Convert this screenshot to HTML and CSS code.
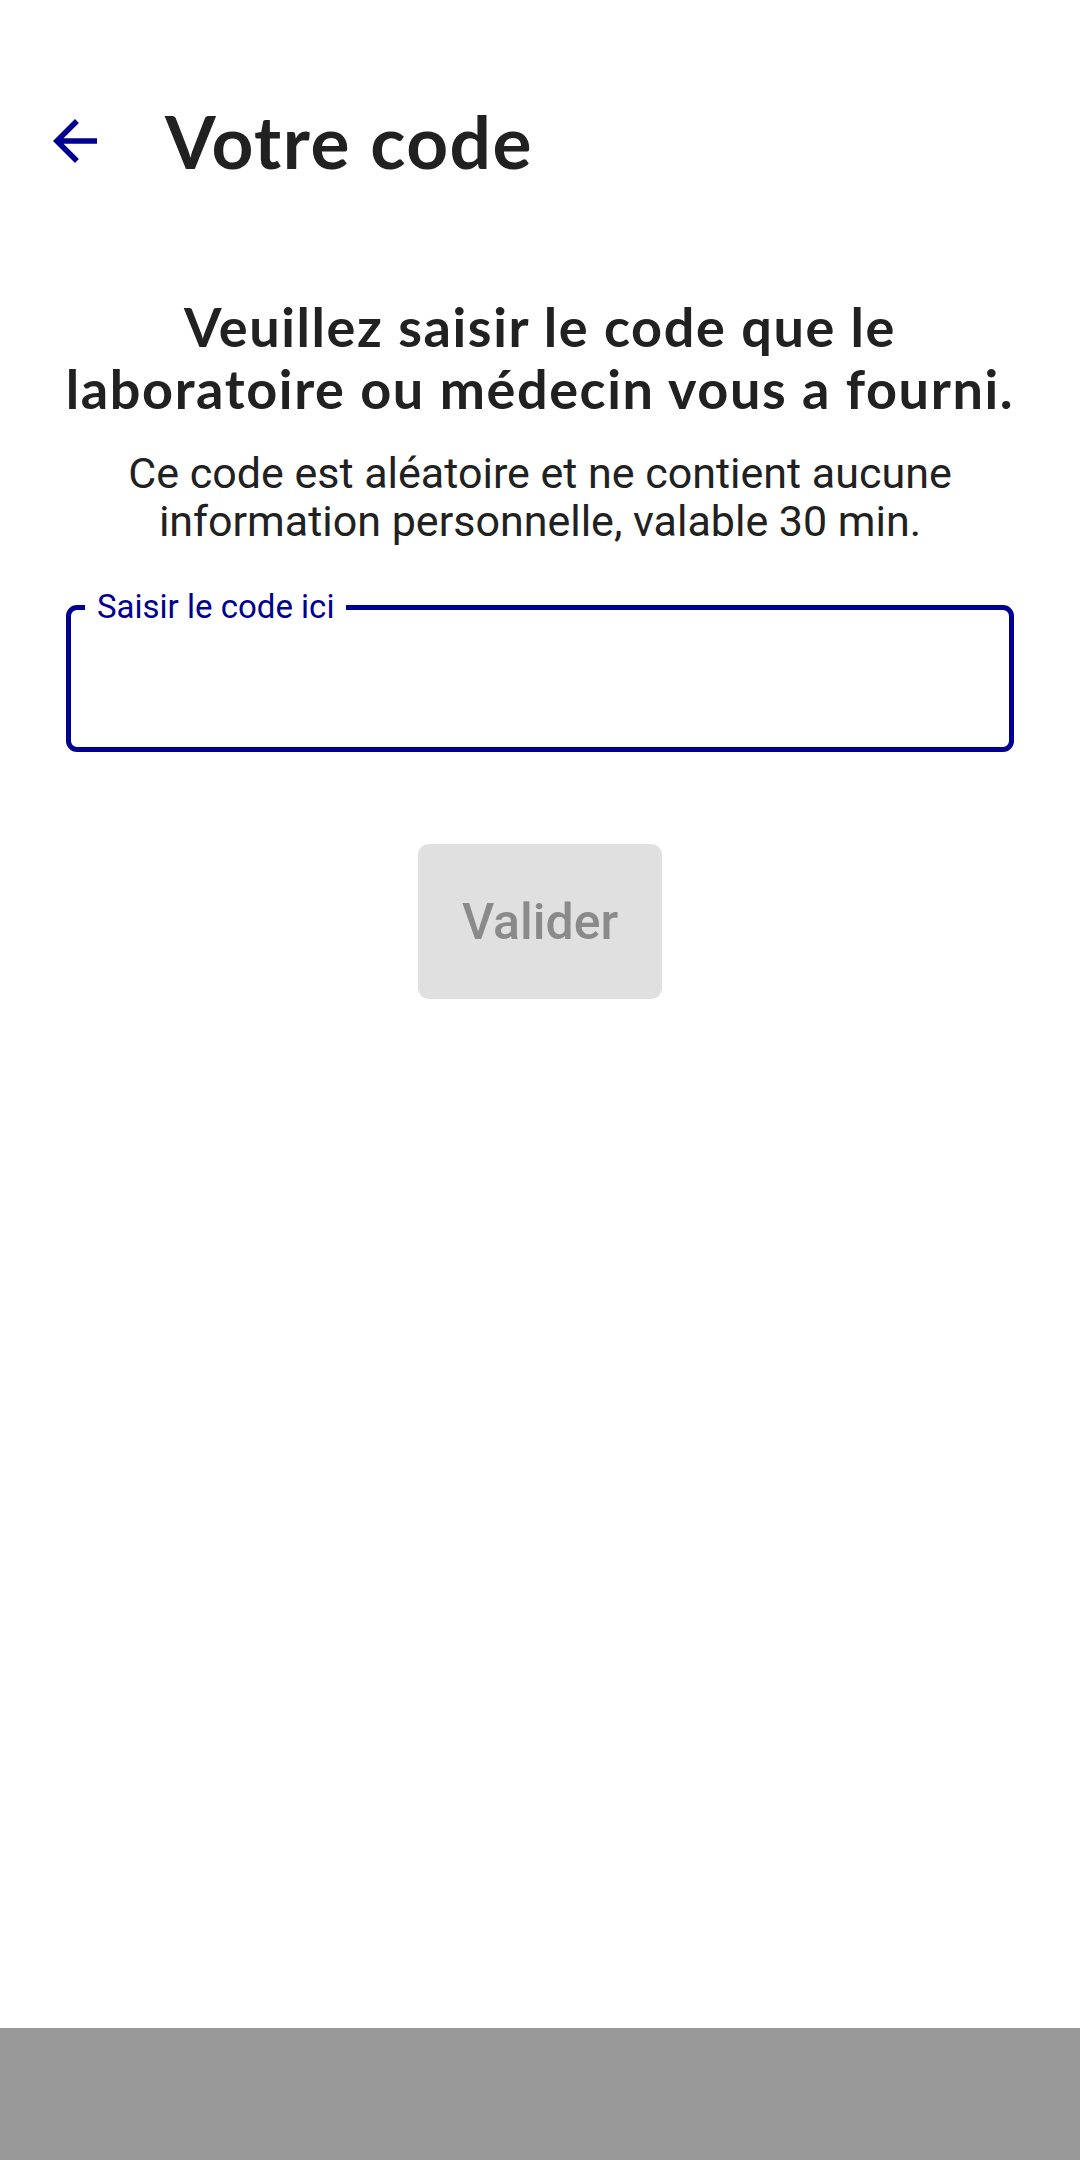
FILE: index.html
```html
<!DOCTYPE html>
<html lang="fr">
<head>
<meta charset="utf-8">
<title>Votre code</title>
<link rel="stylesheet" href="styles.css">
</head>
<body>
<div class="screen">
  <main class="main">
    <header class="topbar">
      <button class="back" aria-label="Retour">
        <svg viewBox="0 0 24 24" width="66" height="66"><path d="M20 11H7.83l5.59-5.59L12 4l-8 8 8 8 1.41-1.41L7.83 13H20v-2z" fill="#000091"/></svg>
      </button>
      <h1 class="title">Votre code</h1>
    </header>
    <section class="content">
      <h2 class="heading">Veuillez saisir le code que le laboratoire ou médecin vous a fourni.</h2>
      <p class="sub">Ce code est aléatoire et ne contient aucune information personnelle, valable 30 min.</p>
      <div class="field">
        <span class="field-label">Saisir le code ici</span>
      </div>
      <div class="actions">
        <button class="validate" disabled>Valider</button>
      </div>
    </section>
  </main>
  <footer class="navbar"></footer>
</div>
</body>
</html>
```
FILE: styles.css
```css
html, body {
  margin: 0;
  padding: 0;
  background: #ffffff;
}
.screen {
  width: 1080px;
  min-height: 2160px;
  display: flex;
  flex-direction: column;
}
.main {
  flex: 1;
}
.topbar {
  display: flex;
  align-items: center;
  padding-top: 97px;
  height: 88px;
}
.back {
  width: 66px;
  height: 66px;
  margin-left: 42px;
  padding: 0;
  border: 0;
  background: none;
  display: flex;
}
.title {
  margin: 0 0 0 57px;
  font-family: Lato, "Noto Sans", sans-serif;
  font-weight: 700;
  font-size: 73px;
  line-height: 88px;
  letter-spacing: 1.5px;
  color: #212121;
}
.content {
  display: flex;
  flex-direction: column;
  padding: 111px 66px 0;
}
.heading {
  margin: 0 -10px;
  text-align: center;
  font-family: Lato, "Noto Sans", sans-serif;
  font-weight: 700;
  font-size: 54px;
  line-height: 62px;
  color: #212121;
  letter-spacing: 1.6px;
}
.sub {
  margin: 29px 0 0;
  text-align: center;
  font-family: Roboto, sans-serif;
  font-size: 43px;
  line-height: 48px;
  color: #212121;
}
.field {
  position: relative;
  margin-top: 60px;
  height: 137px;
  border: 5px solid #000091;
  border-radius: 11px;
}
.field-label {
  position: absolute;
  left: 14px;
  top: -22px;
  padding: 0 12px;
  background: #ffffff;
  font-family: Roboto, sans-serif;
  font-size: 33px;
  line-height: 38px;
  color: #000091;
}
.actions {
  display: flex;
  justify-content: center;
  margin-top: 92px;
}
.validate {
  width: 244px;
  height: 155px;
  border: 0;
  border-radius: 11px;
  background: #e0e0e0;
  color: #8a8a8a;
  font-family: Roboto, sans-serif;
  font-weight: 500;
  font-size: 50px;
}
.navbar {
  height: 132px;
  background: #999999;
}
```
